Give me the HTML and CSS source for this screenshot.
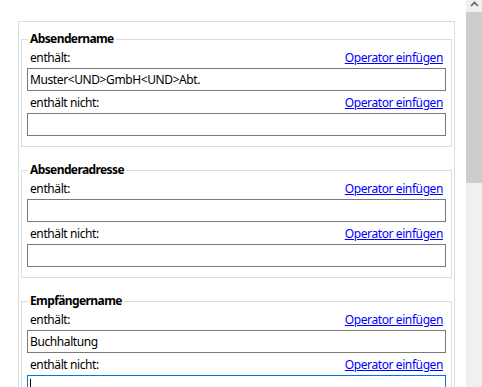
FILE: index.html
```html
<!DOCTYPE html>
<html lang="de">
<head>
    <meta charset="UTF-8">
    <meta name="viewport" content="width=device-width, initial-scale=1.0">
    <title>Filter</title>
    <link rel="stylesheet" href="styles.css">
</head>
<body>
    <div class="window">
        <div class="content">
            <div class="panel">
                <fieldset class="group">
                    <legend>Absendername</legend>
                    <div class="row"><span>enthält:</span><a href="#" class="op">Operator einfügen</a></div>
                    <input class="field" type="text" value="Muster&lt;UND&gt;GmbH&lt;UND&gt;Abt.">
                    <div class="row"><span>enthält nicht:</span><a href="#" class="op">Operator einfügen</a></div>
                    <input class="field" type="text" value="">
                </fieldset>

                <fieldset class="group">
                    <legend>Absenderadresse</legend>
                    <div class="row"><span>enthält:</span><a href="#" class="op">Operator einfügen</a></div>
                    <input class="field" type="text" value="">
                    <div class="row"><span>enthält nicht:</span><a href="#" class="op">Operator einfügen</a></div>
                    <input class="field" type="text" value="">
                </fieldset>

                <fieldset class="group">
                    <legend>Empfängername</legend>
                    <div class="row"><span>enthält:</span><a href="#" class="op">Operator einfügen</a></div>
                    <input class="field" type="text" value="Buchhaltung">
                    <div class="row"><span>enthält nicht:</span><a href="#" class="op">Operator einfügen</a></div>
                    <span class="caret-wrap"><input class="field focused" type="text" value=""></span>
                </fieldset>
            </div>
        </div>

        <div class="scrollbar">
            <div class="sb-btn">
                <svg width="9" height="6" viewBox="0 0 9 6"><polyline points="1,5 4.5,1.5 8,5" fill="none" stroke="#606060" stroke-width="1.6"/></svg>
            </div>
            <div class="sb-thumb"></div>
        </div>
    </div>
</body>
</html>
```

FILE: styles.css
```css
html, body {
    margin: 0;
    height: 100%;
    overflow: hidden;
    background: #fff;
}

body {
    font-family: "Noto Sans", "Open Sans", sans-serif;
    font-size: 12px;
    letter-spacing: -0.4px;
    color: #000;
}

.window {
    display: flex;
    height: 387px;
}

.content {
    flex: 1;
    display: flex;
    flex-direction: column;
    padding: 21px 11px 0 18px;
}

.panel {
    flex: 1;
    border: 1px solid #dcdcdc;
    border-bottom: none;
    padding: 9px 2px 0 2px;
}

.group {
    margin: 0 0 15px 0;
    border: 1px solid #dcdcdc;
    padding: 0 5px 10px 5px;
    min-width: 0;
}

.group legend {
    font-weight: bold;
    letter-spacing: -0.6px;
    line-height: 16px;
    padding: 0 2px;
    margin-left: 1px;
}

.row {
    display: flex;
    justify-content: space-between;
    line-height: 16px;
    padding: 3px 3px 2px 3px;
}

.field + .row {
    padding-top: 4px;
}

.op {
    color: #0000ff;
    text-decoration: underline;
}

.field {
    display: block;
    width: 100%;
    box-sizing: border-box;
    height: 23px;
    margin: 0;
    padding: 0 2px;
    border: 1px solid #7a7a7a;
    font: inherit;
    letter-spacing: inherit;
    color: #000;
    outline: none;
    background: #fff;
}

.field.focused {
    border-color: #0078d7;
}

.caret-wrap {
    position: relative;
    display: block;
}

.caret-wrap::after {
    content: "";
    position: absolute;
    left: 3px;
    top: 4px;
    width: 1px;
    height: 15px;
    background: #000;
}

.scrollbar {
    width: 16px;
    background: #f0f0f0;
    display: flex;
    flex-direction: column;
}

.sb-btn {
    height: 12px;
    display: flex;
    justify-content: center;
    align-items: flex-start;
    padding-top: 1px;
    box-sizing: border-box;
}

.sb-thumb {
    height: 171px;
    background: #cdcdcd;
}
```
